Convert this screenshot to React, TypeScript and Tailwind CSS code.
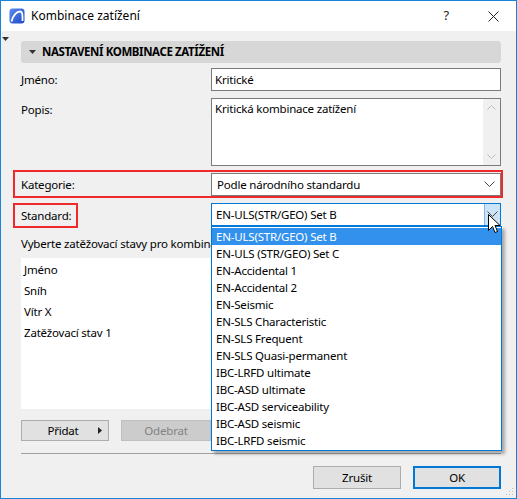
import React from "react";

const items = [
  "EN-ULS(STR/GEO) Set B",
  "EN-ULS (STR/GEO) Set C",
  "EN-Accidental 1",
  "EN-Accidental 2",
  "EN-Seismic",
  "EN-SLS Characteristic",
  "EN-SLS Frequent",
  "EN-SLS Quasi-permanent",
  "IBC-LRFD ultimate",
  "IBC-ASD ultimate",
  "IBC-ASD serviceability",
  "IBC-ASD seismic",
  "IBC-LRFD seismic",
];

function Chevron({ className = "" }: { className?: string }) {
  return (
    <svg width="11" height="7" viewBox="0 0 11 7" className={className}>
      <path d="M0.5 0.5 L5.5 5.5 L10.5 0.5" fill="none" stroke="#444" strokeWidth="1" />
    </svg>
  );
}

export default function App() {
  return (
    <div
      className="relative w-[517px] h-[499px] bg-[#f0f0f0] border border-[#1883d7] text-[11.5px] tracking-[-0.2px] text-black overflow-hidden"
      style={{ fontFamily: '"Noto Sans", "Open Sans", sans-serif' }}
    >
      {/* title bar */}
      <div className="h-[30px] bg-white flex items-center">
        <div className="ml-[8px] w-[16px] h-[16px]">
          <svg width="16" height="16" viewBox="0 0 16 16">
            <defs>
              <linearGradient id="lg" x1="0" y1="0" x2="1" y2="1">
                <stop offset="0" stopColor="#5a8cf0" />
                <stop offset="1" stopColor="#1f48c4" />
              </linearGradient>
            </defs>
            <rect x="0.5" y="0.5" width="15" height="15" rx="3" fill="url(#lg)" />
            <path d="M2.5 13.5 C4 7 8 3.5 11 3.5 C13 3.5 13.5 6 13.5 9 L13.5 13" fill="none" stroke="#fff" strokeWidth="1.8" />
          </svg>
        </div>
        <span className="ml-[6px] text-[12px] tracking-normal">Kombinace zatížení</span>
        <span className="ml-auto mr-[39px] text-[13px] text-[#222]">?</span>
        <svg width="11" height="11" viewBox="0 0 11 11" className="mr-[17px]">
          <path d="M0.5 0.5 L10.5 10.5 M10.5 0.5 L0.5 10.5" stroke="#222" strokeWidth="1" />
        </svg>
      </div>

      {/* small corner triangle */}
      <svg width="7" height="4" viewBox="0 0 7 4" className="absolute left-[1px] top-[36px]">
        <path d="M0 0 L7 0 L3.5 4 Z" fill="#333" />
      </svg>

      {/* body */}
      <div className="pl-[20px] w-[500px]">
        {/* section header */}
        <div className="mt-[10px] h-[22px] w-[480px] rounded-[3px] bg-[#d7d7d7] flex items-center">
          <svg width="7" height="4" viewBox="0 0 7 4" className="ml-[8px]">
            <path d="M0 0 L7 0 L3.5 4 Z" fill="#333" />
          </svg>
          <span className="ml-[6px] font-bold text-[11.5px] tracking-[-0.4px]">NASTAVENÍ KOMBINACE ZATÍŽENÍ</span>
        </div>

        {/* Jméno */}
        <div className="mt-[5px] flex items-center h-[23px]">
          <div className="w-[190px]">Jméno:</div>
          <div className="w-[290px] h-[23px] bg-white border border-[#7a7a7a] flex items-center pl-[3px]">Kritické</div>
        </div>

        {/* Popis */}
        <div className="mt-[7px] flex">
          <div className="w-[190px] pt-[3px]">Popis:</div>
          <div className="w-[290px] h-[68px] bg-white border border-[#7a7a7a] flex">
            <div className="flex-1 pl-[3px] pt-[1px]">Kritická kombinace zatížení</div>
            <div className="w-[17px] bg-[#f0f0f0] flex flex-col items-center justify-between py-[6px]">
              <svg width="9" height="5" viewBox="0 0 9 5">
                <path d="M0.5 4.5 L4.5 0.5 L8.5 4.5" fill="none" stroke="#bbb" />
              </svg>
              <svg width="9" height="5" viewBox="0 0 9 5">
                <path d="M0.5 0.5 L4.5 4.5 L8.5 0.5" fill="none" stroke="#bbb" />
              </svg>
            </div>
          </div>
        </div>

        {/* Kategorie */}
        <div className="mt-[4px] -ml-[8px] w-[490px] h-[28px] border-2 border-[#ee2a2a] flex items-start pl-[6px] pt-[1px]">
          <div className="w-[190px] h-[23px] flex items-center">Kategorie:</div>
          <div className="w-[290px] h-[23px] bg-white border border-[#7a7a7a] flex items-center pl-[5px] pr-[5px]">
            <span className="flex-1">Podle národního standardu</span>
            <Chevron />
          </div>
        </div>

        {/* Standard */}
        <div className="mt-[5px] flex items-start h-[25px]">
          <div className="w-[190px] -ml-[8px] pr-0">
            <div className="w-[65px] h-[25px] border-2 border-[#ee2a2a] flex items-center pl-[6px]">Standard:</div>
          </div>
          <div className="ml-[8px] w-[290px] h-[23px] bg-white border border-[#0078d7] flex items-stretch">
            <span className="flex-1 flex items-center pl-[4px]">EN-ULS(STR/GEO) Set B</span>
            <div className="w-[16px] bg-[#cce4f7] border-l border-[#7eb4ea] flex items-center justify-center">
              <Chevron />
            </div>
          </div>
        </div>

        {/* Vyberte label (clipped by the open dropdown) */}
        <div className="mt-[8px] h-[16px] w-[190px] overflow-hidden flex items-center whitespace-nowrap">Vyberte zatěžovací stavy pro kombinaci zatížení:</div>

        {/* list */}
        <div className="mt-[6px] w-[480px] h-[151px] bg-white pt-[2px] pl-[3px]">
          <div className="h-[20px] flex items-center">Jméno</div>
          <div className="h-[21px] flex items-center">Sníh</div>
          <div className="h-[21px] flex items-center">Vítr X</div>
          <div className="h-[21px] flex items-center">Zatěžovací stav 1</div>
        </div>

        {/* buttons */}
        <div className="mt-[11px] flex gap-[12px]">
          <div className="w-[88px] h-[21px] bg-[#e1e1e1] border border-[#adadad] flex items-center relative">
            <span className="w-full text-center pr-[4px]">Přidat</span>
            <svg width="4" height="7" viewBox="0 0 4 7" className="absolute right-[6px] top-[6px]">
              <path d="M0 0 L4 3.5 L0 7 Z" fill="#222" />
            </svg>
          </div>
          <div className="w-[90px] h-[21px] bg-[#cccccc] border border-[#bfbfbf] flex items-center justify-center text-[#838383]">Odebrat</div>
        </div>

        {/* separator */}
        <div className="mt-[12px] w-[480px] h-px bg-[#a0a0a0]" />

        {/* bottom buttons */}
        <div className="mt-[12px] w-[480px] flex justify-end gap-[12px]">
          <div className="w-[88px] h-[23px] bg-[#e1e1e1] border border-[#adadad] flex items-center justify-center">Zrušit</div>
          <div className="w-[88px] h-[23px] bg-[#e1e1e1] border-2 border-[#0078d7] flex items-center justify-center">OK</div>
        </div>
      </div>

      {/* resize grip */}
      <svg width="8" height="8" viewBox="0 0 8 8" className="absolute right-[2px] bottom-[2px]">
        <rect x="6" y="0" width="1" height="1" fill="#bbb" />
        <rect x="3" y="3" width="1" height="1" fill="#bbb" />
        <rect x="6" y="3" width="1" height="1" fill="#bbb" />
        <rect x="0" y="6" width="1" height="1" fill="#bbb" />
        <rect x="3" y="6" width="1" height="1" fill="#bbb" />
        <rect x="6" y="6" width="1" height="1" fill="#bbb" />
      </svg>

      {/* dropdown list overlay */}
      <div className="absolute left-[210px] top-[225px] w-[291px] bg-white border border-[#0078d7] shadow-[3px_3px_3px_rgba(0,0,0,0.3)] py-px">
        {items.map((it, i) => (
          <div
            key={it}
            className={
              i === 0
                ? "h-[17px] flex items-center pl-[4px] bg-[#3391ee] text-white"
                : "h-[17px] flex items-center pl-[4px]"
            }
          >
            {it}
          </div>
        ))}
      </div>

      {/* mouse cursor */}
      <svg width="13" height="21" viewBox="0 0 13 21" className="absolute left-[487px] top-[213px]">
        <path d="M0.5 0.5 L0.5 16.5 L4.5 12.5 L7 18.5 L9.5 17.5 L7 11.5 L12 11.5 Z" fill="#fff" stroke="#000" strokeWidth="1" strokeLinejoin="round" />
      </svg>
    </div>
  );
}
